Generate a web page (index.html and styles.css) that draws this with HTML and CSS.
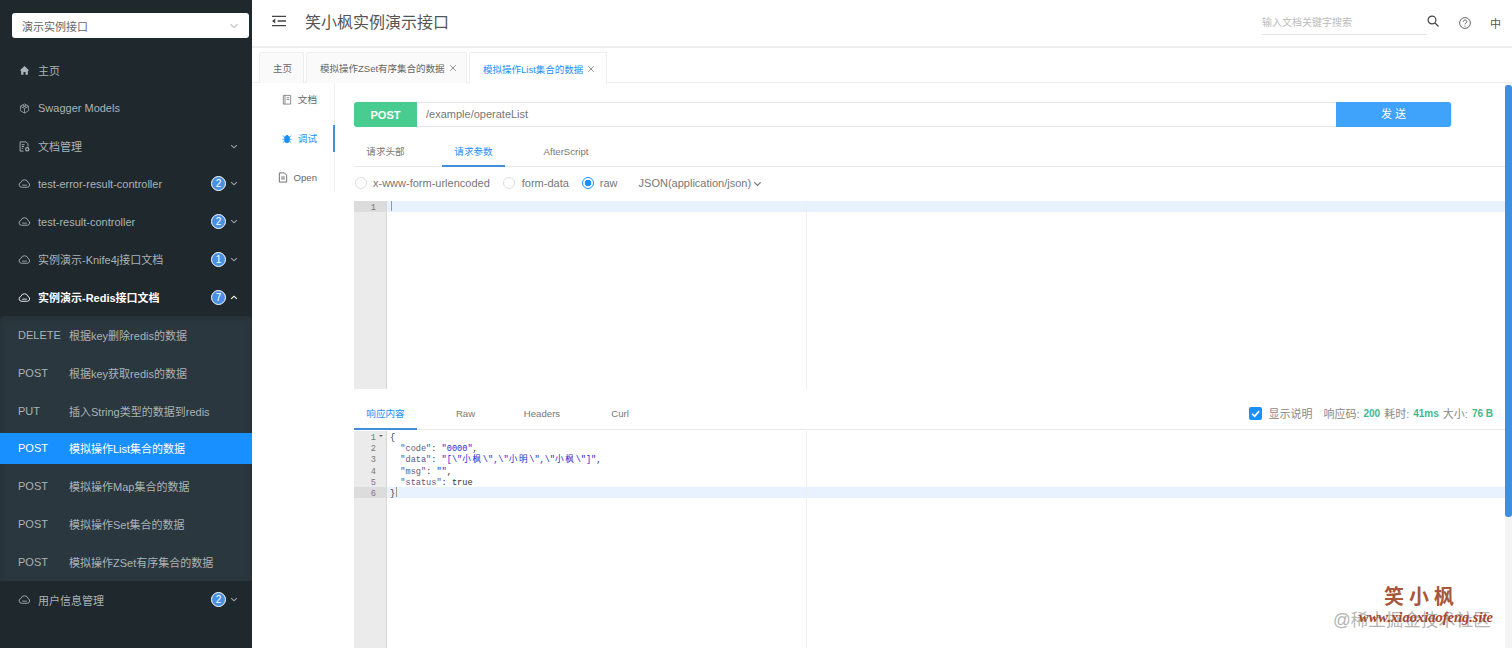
FILE: index.html
```html
<!DOCTYPE html>
<html lang="zh-CN">
  <head>
    <meta charset="UTF-8" />
    <title>笑小枫实例演示接口</title>
    <link rel="stylesheet" href="styles.css">
  </head>
  <body>
    <svg class="defs" width="0" height="0">
      <symbol id="cloud" viewBox="0 0 16 12">
        <path d="M4.200 10.600a3 3 0 0 1-.6-5.900 4.500 4.500 0 0 1 8.700.1 3 3 0 0 1-.5 5.800z" fill="none" stroke="currentColor" stroke-width="1.100"/>
        <path d="M5 8h6" stroke="currentColor" stroke-width="1"/>
      </symbol>
      <symbol id="chev" viewBox="0 0 10 6">
        <path d="M1.500 1.200 5 4.600l3.500-3.400" fill="none" stroke="currentColor" stroke-width="1.400"/>
      </symbol>
      <symbol id="close" viewBox="0 0 10 10">
        <path d="M1.500 1.500l7 7M8.500 1.500l-7 7" stroke="currentColor" stroke-width="1"/>
      </symbol>
    </svg>

    <aside class="sidebar">
      <div class="select">
        <span>演示实例接口</span>
        <svg class="select-arrow"><use href="#chev"/></svg>
      </div>
      <nav class="menu">
        <a class="item">
          <svg class="ico" viewBox="0 0 12 12"><path d="M6 1 .8 6h1.500v4.600h2.600V7.600h2.200v3h2.600V6h1.500z" fill="currentColor"/></svg>
          <span class="label">主页</span>
        </a>
        <a class="item">
          <svg class="ico" viewBox="0 0 12 12"><path d="M6 1l4.400 2.500v5L6 11 1.600 8.500v-5zM1.600 3.500 6 6l4.400-2.500M6 6v5M3.800 2.300 8.200 4.800M8.200 2.300 3.800 4.800" fill="none" stroke="currentColor" stroke-width=".8"/></svg>
          <span class="label">Swagger Models</span>
        </a>
        <a class="item">
          <svg class="ico" viewBox="0 0 12 12"><path d="M5 11H1.200V1h6.600l2 2v3M3 4h3M3 6h2.500M3 8h1.500" fill="none" stroke="currentColor" stroke-width="1"/><circle cx="9" cy="9" r="1.800" fill="none" stroke="currentColor" stroke-width="1.200"/></svg>
          <span class="label">文档管理</span>
          <svg class="chev"><use href="#chev"/></svg>
        </a>
        <a class="item">
          <svg class="ico"><use href="#cloud"/></svg>
          <span class="label">test-error-result-controller</span>
          <b class="badge">2</b>
          <svg class="chev"><use href="#chev"/></svg>
        </a>
        <a class="item">
          <svg class="ico"><use href="#cloud"/></svg>
          <span class="label">test-result-controller</span>
          <b class="badge">2</b>
          <svg class="chev"><use href="#chev"/></svg>
        </a>
        <a class="item">
          <svg class="ico"><use href="#cloud"/></svg>
          <span class="label">实例演示-Knife4j接口文档</span>
          <b class="badge">1</b>
          <svg class="chev"><use href="#chev"/></svg>
        </a>
        <a class="item open">
          <svg class="ico"><use href="#cloud"/></svg>
          <span class="label">实例演示-Redis接口文档</span>
          <b class="badge">7</b>
          <svg class="chev up"><use href="#chev"/></svg>
        </a>
        <div class="submenu">
          <a class="sub"><span class="method">DELETE</span><span>根据key删除redis的数据</span></a>
          <a class="sub"><span class="method">POST</span><span>根据key获取redis的数据</span></a>
          <a class="sub"><span class="method">PUT</span><span>插入String类型的数据到redis</span></a>
          <a class="sub active"><span class="method">POST</span><span>模拟操作List集合的数据</span></a>
          <a class="sub"><span class="method">POST</span><span>模拟操作Map集合的数据</span></a>
          <a class="sub"><span class="method">POST</span><span>模拟操作Set集合的数据</span></a>
          <a class="sub"><span class="method">POST</span><span>模拟操作ZSet有序集合的数据</span></a>
        </div>
        <a class="item">
          <svg class="ico"><use href="#cloud"/></svg>
          <span class="label">用户信息管理</span>
          <b class="badge">2</b>
          <svg class="chev"><use href="#chev"/></svg>
        </a>
      </nav>
    </aside>

    <div class="page">
      <header class="header">
        <svg class="fold" viewBox="0 0 15 12"><path d="M0 1h15M6 6h9M0 11h15" stroke="#444" stroke-width="1.500"/><path d="M0 6l3.500-2.600v5.200z" fill="#444"/></svg>
        <h1>笑小枫实例演示接口</h1>
        <div class="search">输入文档关键字搜索</div>
        <svg class="search-ico" viewBox="0 0 12 12"><circle cx="5" cy="5" r="3.900" fill="none" stroke="#444" stroke-width="1.200"/><path d="M8 8l3.500 3.500" stroke="#444" stroke-width="1.300"/></svg>
        <svg class="help-ico" viewBox="0 0 12 12"><circle cx="6" cy="6" r="5.400" fill="none" stroke="#555" stroke-width=".9"/><path d="M4.300 4.700c0-2.200 3.500-2.200 3.500 0 0 1.300-1.800 1.300-1.800 2.600" fill="none" stroke="#555" stroke-width=".9"/><circle cx="6" cy="9" r=".6" fill="#555"/></svg>
        <span class="lang">中</span>
      </header>

      <div class="tabs">
        <div class="tab tab-home">主页</div>
        <div class="tab tab-zset">模拟操作ZSet有序集合的数据<svg class="x"><use href="#close"/></svg></div>
        <div class="tab tab-list current">模拟操作List集合的数据<svg class="x"><use href="#close"/></svg></div>
      </div>

      <div class="content">
        <div class="side-tabs">
          <div class="side-tab">
            <svg class="side-ico" viewBox="0 0 10 12"><path d="M1 1.500h8v9.500H1zM2.800 1.500v9.500M4.500 4h3M4.500 6h3" fill="none" stroke="#777" stroke-width=".9"/></svg>文档
          </div>
          <div class="side-tab on">
            <svg class="side-ico" viewBox="0 0 12 12"><path d="M3.200 4h5.600v4.400a2.800 2.800 0 0 1-5.600 0zM4.200 4a1.800 1.800 0 0 1 3.600 0M.8 2.500 3.200 4.500M11.200 2.500 8.800 4.500M.5 7h2.700M11.500 7H8.800M1 11l2.400-1.800M11 11 8.600 9.200" fill="#1890ff" stroke="#1890ff" stroke-width=".9"/></svg>调试
          </div>
          <div class="side-tab">
            <svg class="side-ico" viewBox="0 0 10 12"><path d="M1 1h5.500L9 3.500V11H1zM3 5.500h4M3 7.500h4" fill="none" stroke="#666" stroke-width="1"/></svg>Open
          </div>
        </div>

        <main class="main">
          <div class="urlbar">
            <span class="verb">POST</span>
            <span class="path">/example/operateList</span>
            <span class="send">发 送</span>
          </div>

          <div class="subtabs req">
            <span class="st st-a">请求头部</span>
            <span class="st st-b on">请求参数</span>
            <span class="st st-c">AfterScript</span>
          </div>

          <div class="radios">
            <span class="radio"></span><span class="r-text r1">x-www-form-urlencoded</span>
            <span class="radio r2-dot"></span><span class="r-text r2">form-data</span>
            <span class="radio checked"></span><span class="r-text r3">raw</span>
            <span class="r-text ctype">JSON(application/json)<svg class="ctype-arrow"><use href="#chev"/></svg></span>
          </div>

          <div class="editor editor-req">
            <div class="gutter"><div class="gl cur">1</div></div>
            <div class="code">
              <div class="line cur"><i class="caret"></i></div>
            </div>
            <div class="margin"></div>
          </div>

          <div class="subtabs res">
            <span class="st st-a on">响应内容</span>
            <span class="st st-b">Raw</span>
            <span class="st st-c">Headers</span>
            <span class="st st-d">Curl</span>
            <div class="meta">
              <span class="check"><svg viewBox="0 0 12 12"><path d="M2.800 6.200 5.200 8.500 9.300 3.800" fill="none" stroke="#fff" stroke-width="1.500"/></svg></span>
              <span class="m-show">显示说明</span>
              <span>响应码:</span><b>200</b>
              <span>耗时:</span><b>41ms</b>
              <span>大小:</span><b>76 B</b>
            </div>
          </div>

          <div class="editor editor-res">
            <div class="gutter">
              <div class="gl fold-mark">1</div>
              <div class="gl">2</div>
              <div class="gl">3</div>
              <div class="gl">4</div>
              <div class="gl">5</div>
              <div class="gl cur">6</div>
            </div>
            <div class="code">
              <div class="line">{</div>
              <div class="line">  <span class="k">"code"</span>: <span class="s">"0000"</span>,</div>
              <div class="line">  <span class="k">"data"</span>: <span class="s">"[\"<span class="zh">小枫</span>\",\"<span class="zh">小明</span>\",\"<span class="zh">小枫</span>\"]"</span>,</div>
              <div class="line">  <span class="k">"msg"</span>: <span class="s">""</span>,</div>
              <div class="line">  <span class="k">"status"</span>: true</div>
              <div class="line cur">}<i class="caret"></i></div>
            </div>
            <div class="margin"></div>
          </div>
        </main>

        <div class="scrollbar"><div class="thumb"></div></div>
      </div>
    </div>

    <div class="watermark">
      <div class="wm-name">笑小枫</div>
      <div class="wm-row">
        <span class="wm-site">@稀土掘金技术社区</span>
        <span class="wm-url">www.xiaoxiaofeng.site</span>
      </div>
    </div>
  </body>
</html>
```

FILE: styles.css
```css
* {
  margin: 0;
  padding: 0;
  box-sizing: border-box;
}

body {
  display: flex;
  width: 1512px;
  height: 648px;
  overflow: hidden;
  background: #fff;
  color: #666;
  font-family: "Liberation Sans", "Noto Sans CJK SC", sans-serif;
  font-size: 11px;
}

.defs {
  position: absolute;
}

/* Sidebar */
.sidebar {
  flex: 0 0 252px;
  background: #1f282d;
  color: #aab3b7;
}

.select {
  display: flex;
  align-items: center;
  justify-content: space-between;
  width: 237px;
  height: 25px;
  margin: 13px 0 13.6px 12px;
  padding: 0 10px;
  background: #fff;
  border-radius: 3px;
  color: #666;
}

.select-arrow {
  width: 10px;
  height: 6px;
  color: #ccc;
}

.item {
  display: flex;
  align-items: center;
  height: 37.8px;
  padding: 0 14px 0 18px;
}

.item.open {
  color: #fff;
  font-weight: bold;
}

.ico {
  flex: none;
  width: 13px;
  height: 11px;
  margin: 0 7px 0 0;
}

.label {
  flex: 1;
  white-space: nowrap;
}

.badge {
  display: flex;
  align-items: center;
  justify-content: center;
  width: 15px;
  height: 15px;
  margin-right: 4px;
  border: 1px solid #fff;
  border-radius: 50%;
  background: #4a90e2;
  color: #fff;
  font-size: 10px;
  font-weight: normal;
}

.chev {
  width: 8px;
  height: 5px;
  color: #9aa3a7;
}

.chev.up {
  color: #fff;
  transform: rotate(180deg);
}

.submenu {
  display: flex;
  flex-direction: column;
  gap: 6.8px;
  padding: 3.4px 0;
  background: #2b373e;
  border-radius: 4px 4px 0 0;
  box-shadow: inset 0 2px 6px rgba(0, 0, 0, 0.15);
}

.sub {
  display: flex;
  align-items: center;
  height: 31px;
  padding-left: 18px;
}

.sub.active {
  background: #1890ff;
  color: #fff;
}

.method {
  flex: 0 0 51px;
}

/* Header */
.page {
  flex: 1;
  min-width: 0;
  display: flex;
  flex-direction: column;
}

.header {
  display: flex;
  align-items: center;
  height: 48px;
  padding: 0 11px 4px 20px;
  border-bottom: 2px solid #eee;
  color: #555;
}

.fold {
  width: 14px;
  height: 12px;
  margin-right: 19px;
}

.header h1 {
  flex: 1;
  font-size: 16px;
  font-weight: normal;
  color: #555;
}

.search {
  width: 165px;
  height: 25px;
  padding-top: 4px;
  margin-top: 2px;
  border-bottom: 1px solid #e4e4e4;
  color: #bbb;
  font-size: 10px;
}

.search-ico {
  width: 12px;
  height: 12px;
  margin-right: 20px;
}

.help-ico {
  width: 12px;
  height: 12px;
  margin: 4px 19px 0 0;
}

.lang {
  margin-top: 4px;
  font-size: 11px;
  color: #555;
}

/* Tabs */
.tabs {
  display: flex;
  gap: 2px;
  height: 35px;
  padding: 4px 0 0 7px;
  border-bottom: 1px solid #eee;
}

.tab {
  display: flex;
  align-items: center;
  height: 31px;
  padding-left: 13px;
  background: #fafafa;
  border: 1px solid #eee;
  border-bottom: 0;
  border-radius: 2px 2px 0 0;
  font-size: 9.5px;
  white-space: nowrap;
}

.tab-home {
  width: 45px;
}

.tab-zset {
  width: 161px;
}

.tab-list {
  width: 138px;
}

.tab.current {
  height: 32px;
  background: #fff;
  color: #1890ff;
}

.x {
  flex: none;
  width: 8px;
  height: 8px;
  margin-left: 4px;
  color: #777;
}

/* Content */
.content {
  flex: 1;
  min-height: 0;
  display: flex;
}

.side-tabs {
  flex: 0 0 83px;
  height: 109px;
  display: flex;
  flex-direction: column;
  gap: 12px;
  padding-top: 2.5px;
  border-right: 1px solid #eee;
}

.side-tab {
  display: flex;
  align-items: center;
  justify-content: flex-end;
  gap: 6px;
  height: 27px;
  padding-right: 17px;
  font-size: 9.6px;
}

.side-tab.on {
  color: #1890ff;
  border-right: 2px solid #3f8fdc;
  margin-right: -1px;
  padding-right: 16px;
}

.side-ico {
  width: 10px;
  height: 11px;
}

.main {
  flex: 1;
  min-width: 0;
  padding: 19px 0 0 19px;
}

.urlbar {
  display: flex;
  align-items: center;
  width: 1098px;
  height: 25px;
  border: 1px solid #e6e6e6;
  border-left: 0;
  border-radius: 3px;
}

.verb {
  display: flex;
  align-items: center;
  justify-content: center;
  width: 63px;
  height: 25px;
  background: #49cc90;
  border-radius: 3px 0 0 3px;
  color: #fff;
  font-size: 11px;
  font-weight: bold;
}

.path {
  flex: 1;
  padding: 0 0 2px 9px;
  font-size: 11px;
  color: #777;
}

.send {
  width: 115px;
  height: 25px;
  background: #3fa2fb;
  border-radius: 0 3px 3px 0;
  color: #fff;
  font-size: 11px;
  line-height: 25px;
  text-align: center;
}

.subtabs {
  position: relative;
  height: 40px;
  border-bottom: 1px solid #e8e8e8;
}

.subtabs.res {
  height: 29px;
  margin-top: 12px;
}

.st {
  position: absolute;
  bottom: -1px;
  width: 63px;
  height: 28px;
  line-height: 26px;
  text-align: center;
  font-size: 9.6px;
  white-space: nowrap;
  color: #777;
}

.st.on {
  color: #1890ff;
  border-bottom: 2px solid #3f8fdc;
}

.st-a {
  left: 0;
}

.st-b {
  left: 88px;
}

.st-c {
  left: 178px;
  width: 68px;
}

.st-d {
  left: 245px;
  width: 42px;
}

.res .st {
  line-height: 24px;
}

.res .st-b {
  left: 80px;
}

.res .st-c {
  left: 154px;
}

.radios {
  display: flex;
  align-items: center;
  height: 34px;
  padding: 0 0 3px 1px;
}

.radio {
  flex: none;
  width: 12px;
  height: 12px;
  margin-right: 6px;
  border: 1px solid #ddd;
  border-radius: 50%;
}

.r2-dot {
  margin-right: 7px;
}

.radio.checked {
  border-color: #1890ff;
  background: radial-gradient(circle, #1890ff 3px, #fff 3.6px);
}

.r-text {
  color: #777;
}

.r1 {
  margin-right: 13px;
}

.r2 {
  margin-right: 13px;
}

.r3 {
  margin-right: 21px;
}

.ctype-arrow {
  width: 9px;
  height: 6px;
  margin-left: 2px;
  color: #777;
}

/* Code editors */
.editor {
  position: relative;
  display: flex;
  font-family: "Liberation Mono", "Noto Sans CJK SC", monospace;
  font-size: 8.6px;
  line-height: 14px;
}

.editor-req {
  height: 188px;
}

.editor-res {
  height: 218px;
  margin-top: 1px;
}

.gutter {
  flex: 0 0 33px;
  background: #ebebeb;
  border-right: 1px solid #d8d8d8;
  color: #777;
}

.gl {
  height: 11.2px;
  padding-right: 10px;
  text-align: right;
}

.gl.cur {
  background: #dcdcdc;
}

.fold-mark {
  position: relative;
}

.fold-mark::after {
  content: "";
  position: absolute;
  top: 4px;
  right: 3px;
  border: 2.5px solid transparent;
  border-top-color: #666;
}

.code {
  flex: 1;
}

.line {
  height: 11.2px;
  padding-left: 3px;
  white-space: pre;
  color: #333;
}

.line.cur {
  background: #e8f2fe;
}

.caret {
  display: inline-block;
  width: 1px;
  height: 10px;
  margin-left: 1px;
  background: #999;
  vertical-align: top;
}

.k {
  color: #5a5a80;
}

.s {
  color: #2a2ad0;
}

.zh {
  letter-spacing: 1.7px;
}

.margin {
  position: absolute;
  top: 0;
  bottom: 0;
  left: 452px;
  width: 1px;
  background: #eee;
}

.meta {
  position: absolute;
  right: 12px;
  top: 2px;
  display: flex;
  align-items: center;
  gap: 4px;
  height: 20px;
  color: #888;
}

.meta b {
  font-size: 10px;
  color: #3cb98b;
}

.check {
  width: 13px;
  height: 13px;
  margin-right: 2px;
  background: #1890ff;
  border-radius: 2px;
}

.check svg {
  display: block;
  width: 13px;
  height: 13px;
}

.m-show {
  margin-right: 7px;
}

.scrollbar {
  flex: 0 0 7px;
  margin-left: auto;
  padding-top: 2px;
  background: #f4f4f4;
}

.thumb {
  height: 432px;
  background: #3f8fdc;
  border-radius: 3px;
}

/* Watermark over the page corner */
.watermark {
  position: absolute;
  right: 19px;
  top: 584px;
  width: 160px;
  pointer-events: none;
}

.wm-name {
  padding-left: 51px;
  font-family: "Liberation Serif", "Noto Sans CJK SC", serif;
  font-size: 20px;
  font-weight: bold;
  line-height: 26px;
  letter-spacing: 5px;
  color: #a9573a;
}

.wm-row {
  position: relative;
  height: 22px;
}

.wm-site {
  font-size: 17.5px;
  line-height: 20px;
  color: #b4b4b4;
  white-space: nowrap;
}

.wm-url {
  position: absolute;
  right: 0;
  top: -1px;
  font-family: "Liberation Serif", serif;
  font-size: 14.5px;
  font-style: italic;
  font-weight: bold;
  color: #a5472e;
  white-space: nowrap;
}
```
